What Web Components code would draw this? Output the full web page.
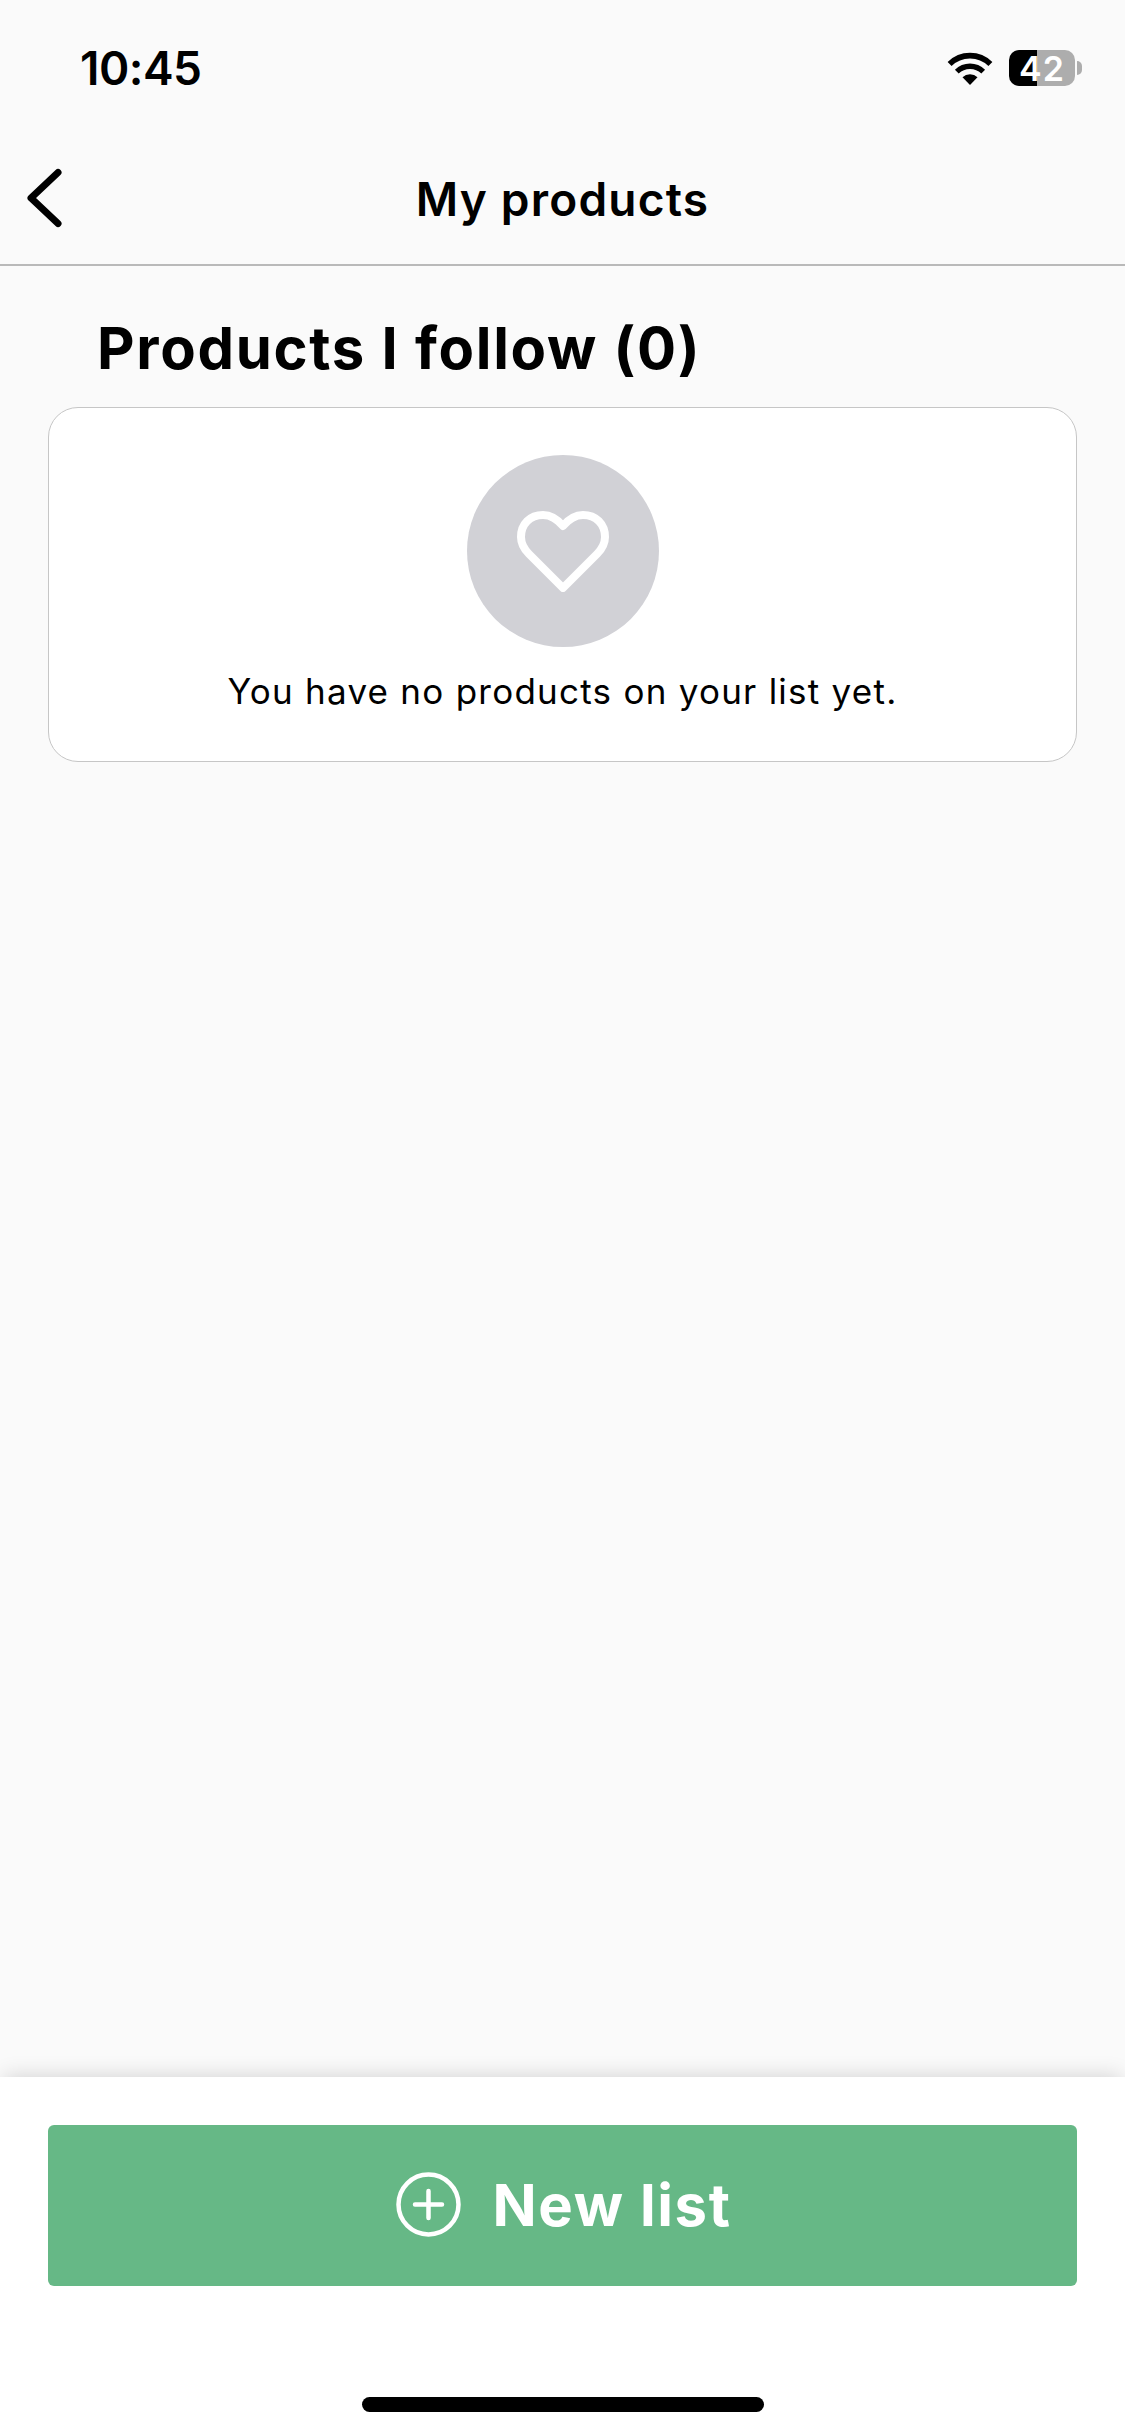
<!DOCTYPE html>
<html>
<head>
<meta charset="utf-8">
<style>
    html, body { margin: 0; padding: 0; }
    body { font-family: Inter, "Liberation Sans", sans-serif; background: #fafafa; color: #000; }
</style>
</head>
<body>
<app-screen>
    <status-bar time="10:45" level="42"></status-bar>
    <nav-header>My products</nav-header>
    <follow-section heading="Products I follow (0)">
        <empty-card>You have no products on your list yet.</empty-card>
    </follow-section>
    <bottom-action>New list</bottom-action>
</app-screen>

<script>
class AppScreen extends HTMLElement {
    connectedCallback() {
        this.attachShadow({ mode: 'open' });
        this.shadowRoot.innerHTML = `
            <style>
                :host {
                    display: flex;
                    flex-direction: column;
                    width: 1125px;
                    height: 2436px;
                    overflow: hidden;
                    background: #fafafa;
                }
            </style>
            <slot></slot>
        `;
    }
}

class StatusBar extends HTMLElement {
    connectedCallback() {
        this.attachShadow({ mode: 'open' });
        this.shadowRoot.innerHTML = `
            <style>
                :host {
                    display: flex;
                    align-items: center;
                    justify-content: space-between;
                    height: 136px;
                    padding: 0 50px 0 80px;
                    box-sizing: border-box;
                }
                .time {
                    font: 600 46px Inter, sans-serif;
                    letter-spacing: -0.5px;
                }
                .icons {
                    display: flex;
                    align-items: center;
                    gap: 16px;
                }
                svg { display: block; }
                .battery {
                    position: relative;
                    display: flex;
                    align-items: center;
                    justify-content: center;
                    width: 66px;
                    height: 36px;
                    border-radius: 10px;
                    background: linear-gradient(90deg, #000 0 42%, #adadad 42% 100%);
                    color: #fff;
                    font: 600 34px Inter, sans-serif;
                    letter-spacing: 1px;
                }
                .battery::after {
                    content: '';
                    position: absolute;
                    right: -7px;
                    top: 11px;
                    width: 5px;
                    height: 14px;
                    border-radius: 0 7px 7px 0;
                    background: #adadad;
                }
            </style>
            <span class="time">${this.getAttribute('time')}</span>
            <div class="icons">
                <svg width="46" height="33" viewBox="0 0 46 33">
                    <path d="M23 33 L15.5 25.3 A11 11 0 0 1 30.5 25.3 Z" fill="#000"/>
                    <path d="M9.8 19.6 A19 19 0 0 1 36.2 19.6" fill="none" stroke="#000" stroke-width="5.4"/>
                    <path d="M2.6 12 A29 29 0 0 1 43.4 12" fill="none" stroke="#000" stroke-width="5.6"/>
                </svg>
                <span class="battery">${this.getAttribute('level')}</span>
            </div>
        `;
    }
}

class NavHeader extends HTMLElement {
    connectedCallback() {
        this.attachShadow({ mode: 'open' });
        this.shadowRoot.innerHTML = `
            <style>
                :host {
                    display: flex;
                    position: relative;
                    align-items: center;
                    justify-content: center;
                    height: 126px;
                    padding-bottom: 2px;
                    border-bottom: 2px solid #b9b9b9;
                    box-sizing: content-box;
                    font: 600 46px Inter, sans-serif;
                    letter-spacing: 1.2px;
                }
                .back {
                    position: absolute;
                    left: 26px;
                    top: 32px;
                    display: block;
                }
            </style>
            <svg class="back" width="36" height="60" viewBox="0 0 36 60">
                <path d="M32 4.5 L5 30 L32 55.5" fill="none" stroke="#000" stroke-width="7" stroke-linecap="round" stroke-linejoin="round"/>
            </svg>
            <slot></slot>
        `;
    }
}

class FollowSection extends HTMLElement {
    connectedCallback() {
        this.attachShadow({ mode: 'open' });
        this.shadowRoot.innerHTML = `
            <style>
                :host {
                    display: block;
                    flex: 1;
                    padding: 0 48px;
                }
                h2 {
                    margin: 0;
                    padding: 50px 0 0 49px;
                    height: 91px;
                    font: 700 58px/65px Inter, sans-serif;
                    letter-spacing: 1.7px;
                }
            </style>
            <h2>${this.getAttribute('heading')}</h2>
            <slot></slot>
        `;
    }
}

class EmptyCard extends HTMLElement {
    connectedCallback() {
        this.attachShadow({ mode: 'open' });
        this.shadowRoot.innerHTML = `
            <style>
                :host {
                    display: flex;
                    flex-direction: column;
                    align-items: center;
                    height: 355px;
                    padding-top: 47px;
                    box-sizing: border-box;
                    background: #fff;
                    border: 1px solid #c6c6c6;
                    border-radius: 30px;
                }
                .badge {
                    display: flex;
                    align-items: center;
                    justify-content: center;
                    width: 192px;
                    height: 192px;
                    border-radius: 50%;
                    background: #d1d1d6;
                }
                p {
                    margin: 21px 0 0;
                    font: 400 35px/46px Inter, sans-serif;
                    letter-spacing: 1.25px;
                }
            </style>
            <div class="badge">
                <svg width="92" height="81" viewBox="0 0 92 81">
                    <path d="M46 77 L12 43 C7 38 4 33 4 26 C4 13 13 4 26 4 C34 4 41 9 46 15 C51 9 58 4 66 4 C79 4 88 13 88 26 C88 33 85 38 80 43 Z" fill="none" stroke="#fff" stroke-width="8" stroke-linejoin="round"/>
                </svg>
            </div>
            <p><slot></slot></p>
        `;
    }
}

class BottomAction extends HTMLElement {
    connectedCallback() {
        this.attachShadow({ mode: 'open' });
        this.shadowRoot.innerHTML = `
            <style>
                :host {
                    display: flex;
                    flex-direction: column;
                    align-items: center;
                    height: 359px;
                    padding: 48px 48px 0;
                    box-sizing: border-box;
                    background: #fff;
                    box-shadow: 0 -5px 20px -4px rgba(0,0,0,0.16);
                    position: relative;
                }
                button {
                    display: flex;
                    align-items: center;
                    justify-content: center;
                    gap: 32px;
                    width: 100%;
                    height: 161px;
                    padding: 0 0 2px 2px;
                    border: 0;
                    border-radius: 6px;
                    background: #66b886;
                    color: #fff;
                    font: 700 58px Inter, sans-serif;
                    letter-spacing: 1.6px;
                }
                svg { flex: none; }
                .home {
                    width: 402px;
                    height: 15px;
                    margin-top: 111px;
                    border-radius: 8px;
                    background: #000;
                }
            </style>
            <button>
                <svg width="65" height="65" viewBox="0 0 65 65">
                    <circle cx="32.5" cy="32.5" r="30" fill="none" stroke="#fff" stroke-width="4.5"/>
                    <path d="M32.5 19 V46 M19 32.5 H46" stroke="#fff" stroke-width="4.5" stroke-linecap="round"/>
                </svg>
                <slot></slot>
            </button>
            <div class="home"></div>
        `;
    }
}

customElements.define('app-screen', AppScreen);
customElements.define('status-bar', StatusBar);
customElements.define('nav-header', NavHeader);
customElements.define('follow-section', FollowSection);
customElements.define('empty-card', EmptyCard);
customElements.define('bottom-action', BottomAction);
</script>
</body>
</html>
